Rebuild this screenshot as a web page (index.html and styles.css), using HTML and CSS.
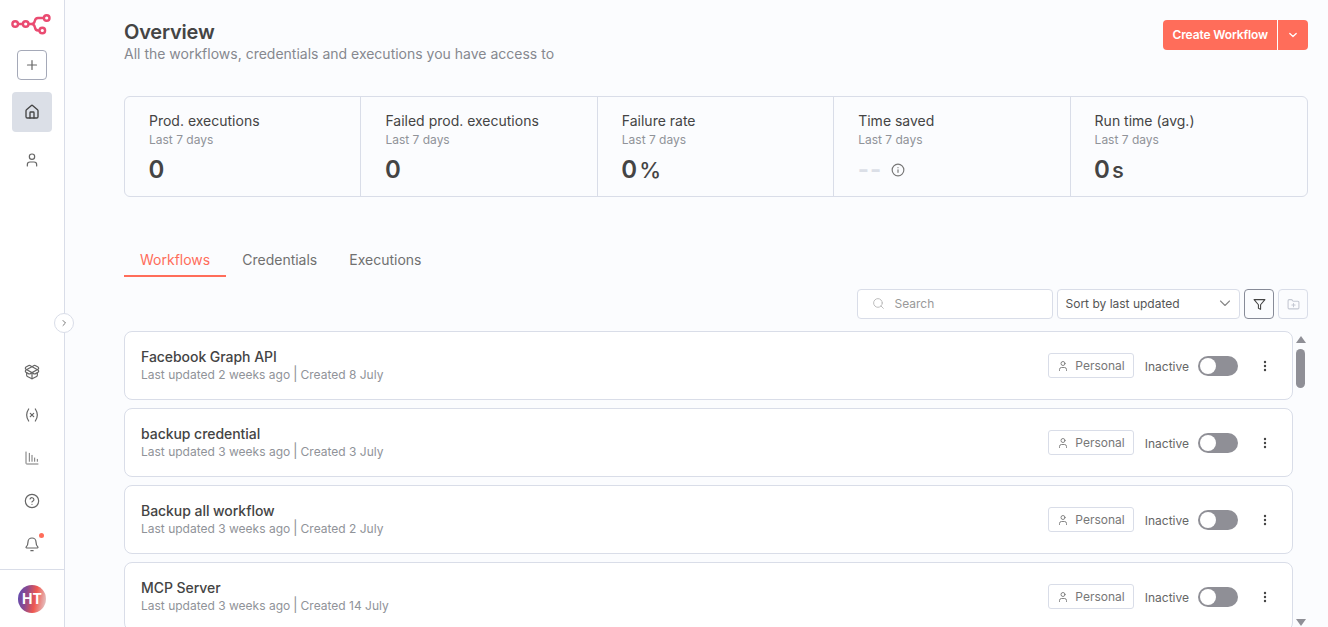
FILE: index.html
```html
<!DOCTYPE html>
<html lang="en">
<head>
<meta charset="utf-8">
<title>Overview</title>
<link rel="stylesheet" href="styles.css">
</head>
<body>
<div class="app">
  <aside class="sidebar">
    <div class="side-top">
      <svg class="logo" width="44" height="24" viewBox="10 12 44 24" fill="none" stroke="#ea4b71" stroke-width="2.400">
        <circle cx="15.200" cy="24" r="2.800"/><circle cx="25.700" cy="24" r="2.800"/><circle cx="46.700" cy="18" r="2.800"/><circle cx="42.300" cy="30.500" r="2.800"/>
        <path d="M18 24h4.900M28.500 24h3c2.500 0 3-1.500 3.300-3 .4-2 1.200-3 3.200-3h5.900M31.500 24c2.500 0 3 1.500 3.300 3 .4 2.500 1.500 3.500 3.300 3.500h1.400"/>
      </svg>
      <button class="add-btn" aria-label="Add">
        <svg width="12" height="12" viewBox="0 0 12 12" fill="none" stroke="#666" stroke-width="1.200" stroke-linecap="round"><path d="M6 1.500v9M1.500 6h9"/></svg>
      </button>
      <a class="nav-item active" aria-label="Home">
        <svg width="16" height="16" viewBox="0 0 24 24" fill="none" stroke="#444" stroke-width="2" stroke-linecap="round" stroke-linejoin="round"><path d="M15 21v-8a1 1 0 0 0-1-1h-4a1 1 0 0 0-1 1v8"/><path d="M3 10a2 2 0 0 1 .7-1.500l7-6a2 2 0 0 1 2.600 0l7 6A2 2 0 0 1 21 10v9a2 2 0 0 1-2 2H5a2 2 0 0 1-2-2z"/></svg>
      </a>
      <a class="nav-item" aria-label="Personal">
        <svg width="16" height="16" viewBox="0 0 24 24" fill="none" stroke="#666" stroke-width="1.800" stroke-linecap="round" stroke-linejoin="round"><path d="M19 21v-2a4 4 0 0 0-4-4H9a4 4 0 0 0-4 4v2"/><circle cx="12" cy="7" r="4"/></svg>
      </a>
    </div>
    <div class="side-bottom">
      <a class="nav-small" aria-label="Templates">
        <svg width="16" height="16" viewBox="0 0 24 24" fill="none" stroke="#666" stroke-width="1.800" stroke-linecap="round" stroke-linejoin="round"><path d="M12 22v-9"/><path d="M15.170 2.210a1.670 1.670 0 0 1 1.630 0L21 4.570a1.930 1.930 0 0 1 0 3.360L8.820 14.790a1.655 1.655 0 0 1-1.640 0L3 12.430a1.930 1.930 0 0 1 0-3.360z"/><path d="M20 13v3.870a2.060 2.060 0 0 1-1.110 1.830l-6 3.080a1.930 1.930 0 0 1-1.780 0l-6-3.080A2.060 2.060 0 0 1 4 16.870V13"/><path d="M21 12.430a1.930 1.930 0 0 0 0-3.360L8.830 2.200a1.640 1.640 0 0 0-1.630 0L3 4.570a1.930 1.930 0 0 0 0 3.360l12.180 6.860a1.636 1.636 0 0 0 1.630 0z"/></svg>
      </a>
      <a class="nav-small" aria-label="Variables">
        <svg width="16" height="16" viewBox="0 0 24 24" fill="none" stroke="#666" stroke-width="1.800" stroke-linecap="round" stroke-linejoin="round"><path d="M7 3C3 9 3 15 7 21M17 3c4 6 4 12 0 18M9.500 9.500l5 5M14.500 9.500l-5 5"/></svg>
      </a>
      <a class="nav-small" aria-label="Insights">
        <svg width="16" height="16" viewBox="0 0 24 24" fill="none" stroke="#777" stroke-width="1.500" stroke-linecap="round"><path d="M3 3v17a1 1 0 0 0 1 1h17M8 5v12M12 8v9M16 12v5M20 14v3"/></svg>
      </a>
      <a class="nav-small" aria-label="Help">
        <svg width="16" height="16" viewBox="0 0 24 24" fill="none" stroke="#666" stroke-width="1.800" stroke-linecap="round" stroke-linejoin="round"><circle cx="12" cy="12" r="10"/><path d="M9.100 9a3 3 0 0 1 5.800 1c0 2-3 2.500-3 3.500M12 17h.01"/></svg>
      </a>
      <a class="nav-small bell" aria-label="Notifications">
        <svg width="16" height="16" viewBox="0 0 24 24" fill="none" stroke="#666" stroke-width="1.800" stroke-linecap="round" stroke-linejoin="round"><path d="M10.300 22h3.400"/><path d="M3.300 16.300A1 1 0 0 0 4 18h16a1 1 0 0 0 .7-1.700C19.400 15 18 13.600 18 9A6 6 0 0 0 6 9c0 4.600-1.400 6-2.700 7.300z"/></svg>
        <span class="dot"></span>
      </a>
      <div class="user"><span class="avatar">HT</span></div>
    </div>
    <button class="collapse" aria-label="Expand">
      <svg width="8" height="8" viewBox="0 0 8 8" fill="none" stroke="#777" stroke-width="1" stroke-linecap="round" stroke-linejoin="round"><path d="M3 1.500L5.500 4 3 6.500"/></svg>
    </button>
  </aside>

  <main class="main">
    <header class="page-head">
      <div>
        <h1 class="title">Overview</h1>
        <p class="subtitle">All the workflows, credentials and executions you have access to</p>
      </div>
      <div class="create">
        <span class="create-label">Create Workflow</span>
        <span class="create-arrow">
          <svg width="10" height="10" viewBox="0 0 10 10" fill="none" stroke="#fff" stroke-width="1.300" stroke-linecap="round" stroke-linejoin="round"><path d="M1.800 3.500L5 6.500l3.200-3"/></svg>
        </span>
      </div>
    </header>

    <section class="stats">
      <div class="stat"><div class="stat-name">Prod. executions</div><div class="stat-sub">Last 7 days</div><div class="stat-val">0</div></div>
      <div class="stat"><div class="stat-name">Failed prod. executions</div><div class="stat-sub">Last 7 days</div><div class="stat-val">0</div></div>
      <div class="stat"><div class="stat-name">Failure rate</div><div class="stat-sub">Last 7 days</div><div class="stat-val">0<span class="unit">%</span></div></div>
      <div class="stat"><div class="stat-name">Time saved</div><div class="stat-sub">Last 7 days</div>
        <div class="stat-val muted"><span class="dash">--</span>
          <svg class="info" width="14" height="14" viewBox="0 0 24 24" fill="none" stroke="#777" stroke-width="2" stroke-linecap="round"><circle cx="12" cy="12" r="10"/><path d="M12 16v-4.500M12 8h.01"/></svg>
        </div>
      </div>
      <div class="stat"><div class="stat-name">Run time (avg.)</div><div class="stat-sub">Last 7 days</div><div class="stat-val">0<span class="unit">s</span></div></div>
    </section>

    <nav class="tabs">
      <a class="tab on">Workflows</a>
      <a class="tab">Credentials</a>
      <a class="tab">Executions</a>
    </nav>

    <div class="toolbar">
      <div class="search">
        <svg width="13" height="13" viewBox="0 0 24 24" fill="none" stroke="#bbb" stroke-width="1.800" stroke-linecap="round"><circle cx="11" cy="11" r="8"/><path d="M21 21l-4.300-4.300"/></svg>
        <span>Search</span>
      </div>
      <div class="sort">
        <span>Sort by last updated</span>
        <svg width="12" height="12" viewBox="0 0 12 12" fill="none" stroke="#888" stroke-width="1.100" stroke-linecap="round" stroke-linejoin="round"><path d="M1.500 4l4.500 4.500L10.500 4"/></svg>
      </div>
      <button class="tool-btn dark" aria-label="Filter">
        <svg width="13" height="13" viewBox="0 0 24 24" fill="none" stroke="#444" stroke-width="2" stroke-linecap="round" stroke-linejoin="round"><path d="M22 3H2l8 9.500V19l4 2v-8.500z"/></svg>
      </button>
      <button class="tool-btn" aria-label="New folder">
        <svg width="13" height="13" viewBox="0 0 24 24" fill="none" stroke="#c4c8d2" stroke-width="2" stroke-linecap="round" stroke-linejoin="round"><path d="M12 10v6M9 13h6"/><path d="M20 20a2 2 0 0 0 2-2V8a2 2 0 0 0-2-2h-7.900a2 2 0 0 1-1.700-.9l-.8-1.200A2 2 0 0 0 7.900 3H4a2 2 0 0 0-2 2v13a2 2 0 0 0 2 2z"/></svg>
      </button>
    </div>

    <div class="list-wrap">
      <div class="list">
        <article class="card">
          <div class="info-col"><div class="wf-name">Facebook Graph API</div><div class="wf-meta">Last updated 2 weeks ago <span class="sep">|</span> Created 8 July</div></div>
          <div class="actions">
            <span class="badge"><svg width="12" height="12" viewBox="0 0 24 24" fill="none" stroke="#777" stroke-width="1.800" stroke-linecap="round"><path d="M19 21v-2a4 4 0 0 0-4-4H9a4 4 0 0 0-4 4v2"/><circle cx="12" cy="7" r="4"/></svg>Personal</span>
            <span class="state">Inactive</span><span class="switch"><span class="knob"></span></span>
            <svg class="more" width="4" height="12" viewBox="0 0 4 12" fill="#444"><circle cx="2" cy="2" r="1.200"/><circle cx="2" cy="6" r="1.200"/><circle cx="2" cy="10" r="1.200"/></svg>
          </div>
        </article>
        <article class="card">
          <div class="info-col"><div class="wf-name">backup credential</div><div class="wf-meta">Last updated 3 weeks ago <span class="sep">|</span> Created 3 July</div></div>
          <div class="actions">
            <span class="badge"><svg width="12" height="12" viewBox="0 0 24 24" fill="none" stroke="#777" stroke-width="1.800" stroke-linecap="round"><path d="M19 21v-2a4 4 0 0 0-4-4H9a4 4 0 0 0-4 4v2"/><circle cx="12" cy="7" r="4"/></svg>Personal</span>
            <span class="state">Inactive</span><span class="switch"><span class="knob"></span></span>
            <svg class="more" width="4" height="12" viewBox="0 0 4 12" fill="#444"><circle cx="2" cy="2" r="1.200"/><circle cx="2" cy="6" r="1.200"/><circle cx="2" cy="10" r="1.200"/></svg>
          </div>
        </article>
        <article class="card">
          <div class="info-col"><div class="wf-name">Backup all workflow</div><div class="wf-meta">Last updated 3 weeks ago <span class="sep">|</span> Created 2 July</div></div>
          <div class="actions">
            <span class="badge"><svg width="12" height="12" viewBox="0 0 24 24" fill="none" stroke="#777" stroke-width="1.800" stroke-linecap="round"><path d="M19 21v-2a4 4 0 0 0-4-4H9a4 4 0 0 0-4 4v2"/><circle cx="12" cy="7" r="4"/></svg>Personal</span>
            <span class="state">Inactive</span><span class="switch"><span class="knob"></span></span>
            <svg class="more" width="4" height="12" viewBox="0 0 4 12" fill="#444"><circle cx="2" cy="2" r="1.200"/><circle cx="2" cy="6" r="1.200"/><circle cx="2" cy="10" r="1.200"/></svg>
          </div>
        </article>
        <article class="card">
          <div class="info-col"><div class="wf-name">MCP Server</div><div class="wf-meta">Last updated 3 weeks ago <span class="sep">|</span> Created 14 July</div></div>
          <div class="actions">
            <span class="badge"><svg width="12" height="12" viewBox="0 0 24 24" fill="none" stroke="#777" stroke-width="1.800" stroke-linecap="round"><path d="M19 21v-2a4 4 0 0 0-4-4H9a4 4 0 0 0-4 4v2"/><circle cx="12" cy="7" r="4"/></svg>Personal</span>
            <span class="state">Inactive</span><span class="switch"><span class="knob"></span></span>
            <svg class="more" width="4" height="12" viewBox="0 0 4 12" fill="#444"><circle cx="2" cy="2" r="1.200"/><circle cx="2" cy="6" r="1.200"/><circle cx="2" cy="10" r="1.200"/></svg>
          </div>
        </article>
      </div>
      <div class="scrollbar">
        <span class="arrow up"></span>
        <span class="thumb"></span>
        <span class="arrow down"></span>
      </div>
    </div>
  </main>
</div>
</body>
</html>
```
FILE: styles.css
```css
* { box-sizing: border-box; }
html, body { margin: 0; height: 100%; overflow: hidden; }
body { font-family: Inter, "Liberation Sans", sans-serif; color: #444; background: #fbfcfe; }
a { display: flex; }
button { padding: 0; font: inherit; background: none; cursor: pointer; }

.app { display: flex; height: 627px; }

.sidebar {
  position: relative; flex: 0 0 65px; width: 65px; background: #fff;
  border-right: 1px solid #d9dde8;
  display: flex; flex-direction: column; justify-content: space-between;
}
.side-top { display: flex; flex-direction: column; align-items: center; padding-top: 12px; }
.logo { display: block; }
.add-btn {
  width: 30px; height: 30px; margin-top: 14px; border: 1px solid #a5a9b8; border-radius: 4px;
  display: flex; align-items: center; justify-content: center; background: #fff;
}
.nav-item { width: 40px; height: 40px; border-radius: 4px; align-items: center; justify-content: center; margin-top: 12px; }
.nav-item + .nav-item { margin-top: 8px; }
.nav-item.active { background: #dbdfe7; }
.side-bottom { display: flex; flex-direction: column; align-items: center; }
.nav-small { width: 40px; height: 43px; align-items: center; justify-content: center; position: relative; }
.dot { position: absolute; right: 8px; top: 11px; width: 5px; height: 5px; border-radius: 50%; background: #ff6d5a; }
.user { align-self: stretch; height: 58px; margin-top: 4px; border-top: 1px solid #d9dde8; display: flex; align-items: center; justify-content: center; }
.avatar {
  width: 28px; height: 28px; border-radius: 50%; color: #fff; font-size: 14px; font-weight: 700;
  display: flex; align-items: center; justify-content: center;
  background: linear-gradient(100deg, #5a4bb5 0%, #8a4a90 30%, #f0584f 60%, #e2d4d6 100%);
}
.collapse {
  position: absolute; top: 313px; right: -10px; width: 20px; height: 20px; border-radius: 50%;
  border: 1px solid #d9dde8; background: #fff; display: flex; align-items: center; justify-content: center;
}

.main { flex: 1; min-width: 0; padding: 20px 20px 0 59px; display: flex; flex-direction: column; }
.page-head { display: flex; justify-content: space-between; align-items: flex-start; height: 76px; }
.title { margin: 0; font-size: 20px; line-height: 24px; font-weight: 600; letter-spacing: -0.2px; color: #444; }
.subtitle { margin: 1px 0 0; font-size: 14px; line-height: 18px; color: #86888f; }
.create { display: flex; height: 30px; border-radius: 4px; background: #ff6d5a; color: #fff; font-size: 12px; font-weight: 600; letter-spacing: -0.13px; overflow: hidden; }
.create-label { display: flex; align-items: center; padding: 0 9px 2px 10px; border-right: 1px solid #fff; }
.create-arrow { width: 30px; display: flex; align-items: center; justify-content: center; }

.stats { display: grid; grid-template-columns: repeat(5, 1fr); height: 101px; border: 1px solid #d9dde8; border-radius: 6px; }
.stat { padding: 16px 24px 0; border-right: 1px solid #d9dde8; }
.stat:last-child { border-right: 0; }
.stat-name { font-size: 14px; line-height: 16px; color: #444; }
.stat-sub { margin-top: 3px; font-size: 12px; line-height: 15px; color: #909399; }
.stat-val { margin-top: 8px; margin-left: -0.5px; font-size: 24px; line-height: 29px; font-weight: 600; color: #444; display: flex; align-items: baseline; }
.unit { font-size: 22px; font-weight: 500; margin-left: 2px; }
.stat-val.muted { align-items: center; }
.dash { color: #dbdfe7; font-size: 24px; font-weight: 700; letter-spacing: 1px; }
.info { margin-left: 9px; }

.tabs { display: flex; margin-top: 49px; height: 31px; }
.tab { padding: 0 16px 4px; height: 31px; align-items: center; font-size: 14px; color: #707070; }
.tab.on { color: #ff6d5a; border-bottom: 2px solid #ff6d5a; padding: 0 16px 2px; }

.toolbar { display: flex; justify-content: flex-end; gap: 4px; margin-top: 12px; height: 30px; }
.search { width: 196px; border: 1px solid #d9dde8; border-radius: 4px; background: #fff; display: flex; align-items: center; gap: 10px; padding: 0 0 2px 13.5px; font-size: 12px; color: #999; }
.sort { width: 183px; border: 1px solid #d9dde8; border-radius: 4px; background: #fff; display: flex; align-items: center; justify-content: space-between; padding: 0 8px 2px 7.5px; font-size: 12px; color: #555; }
.tool-btn { width: 30px; border: 1px solid #d9dde8; border-radius: 4px; display: flex; align-items: center; justify-content: center; background: #fbfcfe; }
.tool-btn.dark { border-color: #878b98; }

.list-wrap { flex: 1; min-height: 0; display: flex; margin-top: 12px; overflow: hidden; }
.list { flex: 1; min-width: 0; display: flex; flex-direction: column; gap: 8px; }
.card { flex: 0 0 69px; display: flex; align-items: center; justify-content: space-between; background: #fff; border: 1px solid #d9dde8; border-radius: 8px; padding: 0 16px; }
.info-col { padding-bottom: 2px; }
.wf-name { font-size: 14px; line-height: 17px; font-weight: 500; letter-spacing: -0.05px; color: #444; }
.wf-meta { margin-top: 1px; font-size: 12px; line-height: 15px; color: #909399; }
.sep { font-size: 14px; margin: 0 -0.5px; }
.actions { display: flex; align-items: center; }
.badge { display: flex; align-items: center; gap: 6px; height: 25px; border: 1px solid #d9dde8; border-radius: 3px; padding: 0 8px; font-size: 12px; color: #777; }
.state { margin-left: 11px; font-size: 12px; color: #666; padding-top: 1px; }
.switch { margin-left: 9px; width: 40px; height: 20px; border-radius: 10px; background: #8f8f96; padding: 2px; display: flex; }
.knob { width: 16px; height: 16px; border-radius: 50%; background: #fff; }
.more { margin-left: 25px; margin-right: 9px; }

.scrollbar { flex: 0 0 15px; position: relative; display: flex; flex-direction: column; align-items: center; }
.arrow { position: absolute; left: 3px; width: 0; height: 0; border-left: 5px solid transparent; border-right: 5px solid transparent; }
.arrow.up { top: 5px; border-bottom: 7px solid #8f8f96; }
.arrow.down { bottom: 1px; border-top: 7px solid #8f8f96; }
.thumb { position: absolute; top: 18px; left: 3px; width: 9px; height: 39px; border-radius: 5px; background: #8f8f96; }
```
